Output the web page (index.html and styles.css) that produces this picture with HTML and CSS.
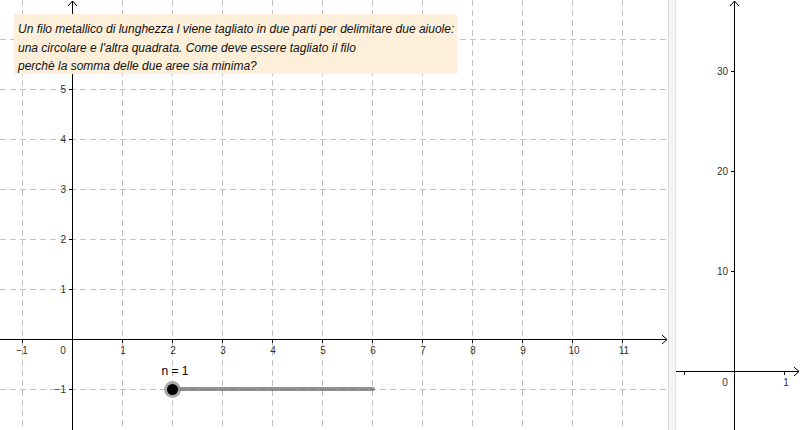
FILE: index.html
```html
<!DOCTYPE html>
<html lang="it">
<head>
<meta charset="utf-8">
<title>Filo metallico</title>
<link rel="stylesheet" href="styles.css">
</head>
<body>
<div class="app">
  <div class="view view-left">
    <svg class="canvas" width="668" height="430" viewBox="0 0 668 430">
      <g class="grid">
        <line x1="22" y1="0" x2="22" y2="430"/>
        <line x1="122" y1="0" x2="122" y2="430"/>
        <line x1="172" y1="0" x2="172" y2="430"/>
        <line x1="222" y1="0" x2="222" y2="430"/>
        <line x1="272" y1="0" x2="272" y2="430"/>
        <line x1="322" y1="0" x2="322" y2="430"/>
        <line x1="372" y1="0" x2="372" y2="430"/>
        <line x1="422" y1="0" x2="422" y2="430"/>
        <line x1="472" y1="0" x2="472" y2="430"/>
        <line x1="522" y1="0" x2="522" y2="430"/>
        <line x1="572" y1="0" x2="572" y2="430"/>
        <line x1="622" y1="0" x2="622" y2="430"/>
        <line x1="0" y1="39" x2="668" y2="39"/>
        <line x1="0" y1="89" x2="668" y2="89"/>
        <line x1="0" y1="139" x2="668" y2="139"/>
        <line x1="0" y1="189" x2="668" y2="189"/>
        <line x1="0" y1="239" x2="668" y2="239"/>
        <line x1="0" y1="289" x2="668" y2="289"/>
        <line x1="0" y1="389" x2="668" y2="389"/>
      </g>
      <g class="axis">
        <line x1="0" y1="339.5" x2="667" y2="339.5"/>
        <polyline points="662,335 667,339.5 662,344"/>
        <line x1="72.5" y1="1" x2="72.5" y2="430"/>
        <polyline points="68,6 72.5,1 77,6"/>
        <line x1="22" y1="339.5" x2="22" y2="343"/>
        <line x1="122" y1="339.5" x2="122" y2="343"/>
        <line x1="172" y1="339.5" x2="172" y2="343"/>
        <line x1="222" y1="339.5" x2="222" y2="343"/>
        <line x1="272" y1="339.5" x2="272" y2="343"/>
        <line x1="322" y1="339.5" x2="322" y2="343"/>
        <line x1="372" y1="339.5" x2="372" y2="343"/>
        <line x1="422" y1="339.5" x2="422" y2="343"/>
        <line x1="472" y1="339.5" x2="472" y2="343"/>
        <line x1="522" y1="339.5" x2="522" y2="343"/>
        <line x1="572" y1="339.5" x2="572" y2="343"/>
        <line x1="622" y1="339.5" x2="622" y2="343"/>
        <line x1="69" y1="89" x2="72.5" y2="89"/>
        <line x1="69" y1="139" x2="72.5" y2="139"/>
        <line x1="69" y1="189" x2="72.5" y2="189"/>
        <line x1="69" y1="239" x2="72.5" y2="239"/>
        <line x1="69" y1="289" x2="72.5" y2="289"/>
        <line x1="69" y1="389" x2="72.5" y2="389"/>
      </g>
      <g class="labels">
        <text x="22" y="354" text-anchor="middle">−1</text>
        <text x="63" y="354" text-anchor="middle">0</text>
        <text x="123" y="354" text-anchor="middle">1</text>
        <text x="173" y="354" text-anchor="middle">2</text>
        <text x="223" y="354" text-anchor="middle">3</text>
        <text x="273" y="354" text-anchor="middle">4</text>
        <text x="323" y="354" text-anchor="middle">5</text>
        <text x="373" y="354" text-anchor="middle">6</text>
        <text x="423" y="354" text-anchor="middle">7</text>
        <text x="473" y="354" text-anchor="middle">8</text>
        <text x="523" y="354" text-anchor="middle">9</text>
        <text x="574" y="354" text-anchor="middle">10</text>
        <text x="624" y="354" text-anchor="middle">11</text>
        <text x="66" y="93" text-anchor="end">5</text>
        <text x="66" y="143" text-anchor="end">4</text>
        <text x="66" y="193" text-anchor="end">3</text>
        <text x="66" y="243" text-anchor="end">2</text>
        <text x="66" y="293" text-anchor="end">1</text>
        <text x="66" y="393" text-anchor="end">−1</text>
      </g>
      <g class="slider">
        <line class="slider-track" x1="172" y1="389" x2="373" y2="389"/>
        <circle class="slider-halo" cx="172.5" cy="389.5" r="8.5"/>
        <circle class="slider-dot" cx="172.5" cy="389.5" r="5.5"/>
        <text class="slider-label" x="175" y="375" text-anchor="middle">n = 1</text>
      </g>
    </svg>
    <div class="note">
      <p>Un filo metallico di lunghezza l viene tagliato in due parti per delimitare due aiuole:</p>
      <p>una circolare e l'altra quadrata. Come deve essere tagliato il filo</p>
      <p>perchè la somma delle due aree sia minima?</p>
    </div>
  </div>
  <div class="divider"></div>
  <div class="view view-right">
    <svg class="canvas" width="124" height="430" viewBox="676 0 124 430">
      <g class="axis">
        <line x1="676" y1="371.5" x2="799" y2="371.5"/>
        <polyline points="794,367 799,371.5 794,376"/>
        <line x1="734.5" y1="1" x2="734.5" y2="430"/>
        <polyline points="730,6 734.5,1 739,6"/>
        <line x1="684.5" y1="371.5" x2="684.5" y2="375"/>
        <line x1="784.5" y1="371.5" x2="784.5" y2="375"/>
        <line x1="731" y1="71.5" x2="734.5" y2="71.5"/>
        <line x1="731" y1="171.5" x2="734.5" y2="171.5"/>
        <line x1="731" y1="271.5" x2="734.5" y2="271.5"/>
      </g>
      <g class="labels">
        <text x="725" y="386" text-anchor="middle">0</text>
        <text x="786" y="386" text-anchor="middle">1</text>
        <text x="728" y="75" text-anchor="end">30</text>
        <text x="728" y="175" text-anchor="end">20</text>
        <text x="728" y="275" text-anchor="end">10</text>
      </g>
    </svg>
  </div>
</div>
</body>
</html>
```
FILE: styles.css
```css
html, body {
  margin: 0;
  padding: 0;
  background: #ffffff;
}
body {
  width: 800px;
  height: 430px;
  overflow: hidden;
  font-family: "Liberation Sans", Arial, sans-serif;
}
.app {
  display: flex;
  width: 800px;
  height: 430px;
}
.view {
  position: relative;
  height: 430px;
  background: #ffffff;
}
.view-left {
  width: 668px;
}
.view-right {
  width: 124px;
}
.canvas {
  display: block;
}
.divider {
  width: 6px;
  height: 430px;
  background: #f3f3f3;
  border-left: 1px solid #dcdcdc;
  border-right: 1px solid #e2e2e2;
}
.grid line {
  stroke: #c0c0c0;
  stroke-width: 1;
  stroke-dasharray: 6 4;
  shape-rendering: crispEdges;
}
.axis line,
.axis polyline {
  stroke: #000000;
  stroke-width: 1;
  fill: none;
}
.axis line {
  shape-rendering: crispEdges;
}
.labels text {
  font-family: "Liberation Sans", Arial, sans-serif;
  font-size: 10px;
  fill: #333333;
}
.slider-track {
  stroke: #6e6e6e;
  stroke-opacity: 0.75;
  stroke-width: 4;
  stroke-linecap: round;
}
.slider-halo {
  fill: #8a8a8a;
  fill-opacity: 0.7;
}
.slider-dot {
  fill: #000000;
}
.slider-label {
  font-family: "Liberation Sans", Arial, sans-serif;
  font-size: 12px;
  fill: #000000;
}
.note {
  position: absolute;
  left: 14px;
  top: 14px;
  box-sizing: border-box;
  width: 443px;
  height: 60px;
  padding: 6px 4px 0 4px;
  background: #fdefd9;
  font-family: "Liberation Sans", Arial, sans-serif;
  font-style: italic;
  font-size: 12px;
  color: #111111;
  white-space: nowrap;
}
.note p {
  margin: 0;
  line-height: 18.5px;
}
```
